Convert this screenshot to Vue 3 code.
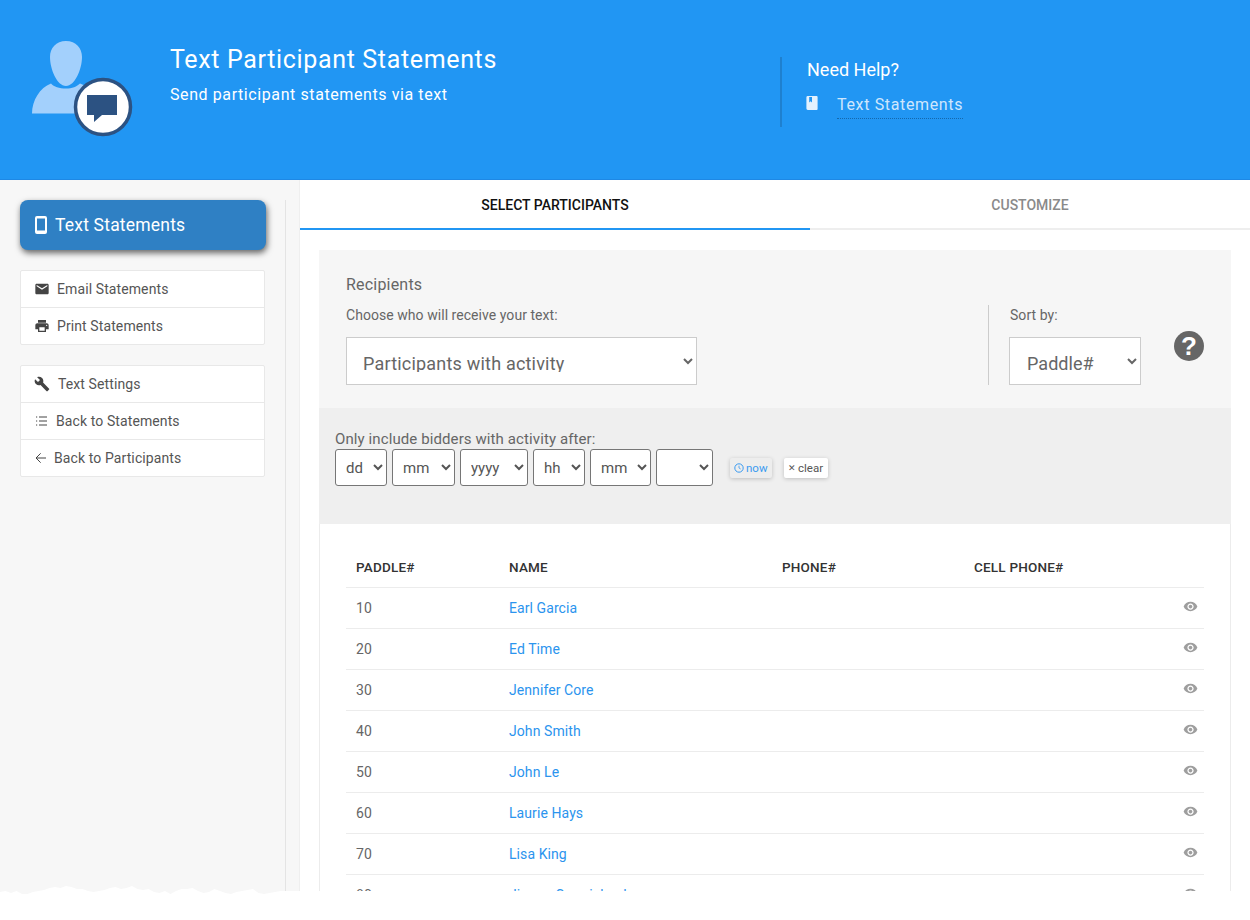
<script setup>
const nav1 = [
  { label: 'Email Statements', icon: 'mail' },
  { label: 'Print Statements', icon: 'print' },
]
const nav2 = [
  { label: 'Text Settings', icon: 'wrench' },
  { label: 'Back to Statements', icon: 'list' },
  { label: 'Back to Participants', icon: 'back' },
]
const icons = {
  mail: 'M20 4H4c-1.1 0-2 .9-2 2v12c0 1.1.9 2 2 2h16c1.1 0 2-.9 2-2V6c0-1.1-.9-2-2-2zm0 4-8 5-8-5V6l8 5 8-5v2z',
  print: 'M19 8H5c-1.66 0-3 1.34-3 3v6h4v4h12v-4h4v-6c0-1.66-1.34-3-3-3zm-3 11H8v-5h8v5zm3-7c-.55 0-1-.45-1-1s.45-1 1-1 1 .45 1 1-.45 1-1 1zm-1-9H6v4h12V3z',
  wrench: 'M22.7 19l-9.1-9.1c.9-2.3.4-5-1.5-6.9-2-2-5-2.4-7.4-1.3L9 6 6 9 1.6 4.7C.4 7.1.9 10.1 2.9 12.1c1.9 1.9 4.6 2.4 6.9 1.5l9.1 9.1c.4.4 1 .4 1.4 0l2.3-2.3c.5-.4.5-1.1.1-1.4z',
  list: 'M3 6h1.800M7.500 6h12M3 12h1.800M7.500 12h12M3 18h1.800M7.500 18h12',
  back: 'M18 12H3.500M10 5l-7 7 7 7',
}
const dateParts = [
  { label: 'dd', cls: 'w-dd' },
  { label: 'mm', cls: 'w-mm' },
  { label: 'yyyy', cls: 'w-yy' },
  { label: 'hh', cls: 'w-dd' },
  { label: 'mm', cls: 'w-mi' },
  { label: '', cls: 'w-ap' },
]
const rows = [
  ['10', 'Earl Garcia'],
  ['20', 'Ed Time'],
  ['30', 'Jennifer Core'],
  ['40', 'John Smith'],
  ['50', 'John Le'],
  ['60', 'Laurie Hays'],
  ['70', 'Lisa King'],
  ['80', 'Jimmy Carmichael'],
]
const eye = 'M12 4.5C7 4.5 2.73 7.61 1 12c1.73 4.39 6 7.5 11 7.5s9.27-3.11 11-7.5c-1.73-4.39-6-7.5-11-7.5zM12 17c-2.76 0-5-2.24-5-5s2.24-5 5-5 5 2.24 5 5-2.24 5-5 5zm0-8c-1.66 0-3 1.34-3 3s1.34 3 3 3 3-1.34 3-3-1.34-3-3-3z'

// torn paper edge along the bottom of the capture
const tornHeights = [7,6,8,6,9,9,7,6,5,3,2,3,1,2,4,4,6,7,6,5,3,2,4,3,1,4,5,4,7,8,6,9,6,4,4,3,6,8,7,4,6,8,9,7,6,5,4,8,9,8,7,6,6,6,6,6,6,6,6,6]
const tornPoints = (() => {
  const pts = ['0,920', '0,' + (885 + tornHeights[0])]
  tornHeights.forEach((h, i) => pts.push((i * 5.5).toFixed(1) + ',' + (885 + h)))
  pts.push('1250,891', '1250,920')
  return pts.join(' ')
})()
</script>

<template>
  <div class="page">
    <header class="hero">
      <div class="logo">
        <svg width="170" height="100" viewBox="0 33 170 100">
          <path class="person" d="M66 41c-10 0-16 7-16 16 0 12 7 29 16 29s16-17 16-29c0-9-6-16-16-16zM32 113.500c0-13 8-26 19-30 3 3.500 8 5 15 5 6 0 11-2 14-5l12 5v25z" />
          <circle class="ring" cx="103" cy="107" r="27.500" />
          <path class="bubble" d="M87 95h30v20h-15l-8 7v-7h-7z" />
        </svg>
      </div>
      <div class="hero-text">
        <h1>Text Participant Statements</h1>
        <p>Send participant statements via text</p>
      </div>
      <div class="help">
        <div class="help-title">Need Help?</div>
        <div class="help-link">
          <svg class="book" width="12" height="14" viewBox="0 0 12 15">
            <path d="M1.500 0H11a1 1 0 0 1 1 1v13a1 1 0 0 1-1 1H1.500A1.500 1.500 0 0 1 0 13.500v-12A1.500 1.500 0 0 1 1.500 0zM3 1v6l1.500-1.300L6 7V1z" fill-rule="evenodd" />
          </svg>
          <a>Text Statements</a>
        </div>
      </div>
    </header>

    <div class="body">
      <aside class="sidebar">
        <div class="sidebar-inner">
          <button class="primary">
            <svg width="12" height="18" viewBox="0 0 12 18">
              <path d="M2 0h8a2 2 0 0 1 2 2v14a2 2 0 0 1-2 2H2a2 2 0 0 1-2-2V2a2 2 0 0 1 2-2zm0 2.500v12h8v-12z" fill-rule="evenodd" />
            </svg>
            <span>Text Statements</span>
          </button>
          <ul class="nav">
            <li v-for="n in nav1" :key="n.label" :class="'i-' + n.icon">
              <svg class="nav-icon" width="16" height="16" viewBox="0 0 24 24"><path :d="icons[n.icon]" /></svg>
              <span>{{ n.label }}</span>
            </li>
          </ul>
          <ul class="nav">
            <li v-for="n in nav2" :key="n.label" :class="'i-' + n.icon">
              <svg class="nav-icon" width="16" height="16" viewBox="0 0 24 24"><path :d="icons[n.icon]" /></svg>
              <span>{{ n.label }}</span>
            </li>
          </ul>
        </div>
      </aside>

      <main class="main">
        <nav class="tabs">
          <div class="tab active">SELECT PARTICIPANTS</div>
          <div class="tab">CUSTOMIZE</div>
        </nav>
        <section class="panel">
          <div class="recipients">
            <div class="rec-left">
              <div class="rec-title">Recipients</div>
              <label class="rec-label">Choose who will receive your text:</label>
              <select class="big-select rec-select">
                <option>Participants with activity</option>
              </select>
            </div>
            <div class="rec-sort">
              <label class="rec-label">Sort by:</label>
              <select class="big-select sort-select">
                <option>Paddle#</option>
              </select>
            </div>
            <div class="q-badge">?</div>
          </div>

          <div class="date-filter">
            <div class="date-label">Only include bidders with activity after:</div>
            <div class="date-row">
              <select v-for="(p, i) in dateParts" :key="i" class="date-select" :class="p.cls">
                <option>{{ p.label }}</option>
              </select>
              <button class="mini now">
                <svg width="10" height="10" viewBox="0 0 10 10">
                  <circle cx="5" cy="5" r="4.200" fill="none" stroke="currentColor" />
                  <path d="M5 2.700V5l1.700 1" fill="none" stroke="currentColor" stroke-width=".8" />
                </svg>
                now
              </button>
              <button class="mini clear"><span class="x">✕</span>clear</button>
            </div>
          </div>

          <div class="table-wrap">
            <table>
              <thead>
                <tr>
                  <th class="c1">PADDLE#</th>
                  <th class="c2">NAME</th>
                  <th class="c3">PHONE#</th>
                  <th class="c4">CELL PHONE#</th>
                  <th class="c5"></th>
                </tr>
              </thead>
              <tbody>
                <tr v-for="r in rows" :key="r[0]">
                  <td class="c1">{{ r[0] }}</td>
                  <td class="c2"><a>{{ r[1] }}</a></td>
                  <td></td>
                  <td></td>
                  <td class="c5">
                    <svg width="15" height="15" viewBox="0 0 24 24"><path :d="eye" /></svg>
                  </td>
                </tr>
              </tbody>
            </table>
          </div>
        </section>
      </main>
    </div>

    <svg class="torn" width="1250" height="920" viewBox="0 0 1250 920">
      <polygon :points="tornPoints" fill="#fff" />
    </svg>
  </div>
</template>

<style>
html, body { margin: 0; background: #fff; }
</style>

<style scoped>
.page {
  position: relative;
  width: 1250px;
  height: 920px;
  overflow: hidden;
  background: #fff;
  font-family: Roboto, "Liberation Sans", sans-serif;
  color: #666;
}
.hero {
  height: 180px;
  box-sizing: border-box;
  background: #2196f3;
  display: flex;
  color: #fff;
  border-bottom: 1px solid #1e88e5;
}
.logo { width: 170px; flex: none; padding-top: 33px; box-sizing: border-box; }
.logo svg { display: block; overflow: visible; }
.person { fill: #a3d0fc; }
.ring { fill: #fff; stroke: #2c5282; stroke-width: 3.500; }
.bubble { fill: #2c5282; }
.hero-text { width: 610px; flex: none; padding-top: 44px; box-sizing: border-box; }
.hero-text h1 { margin: 0; font-size: 25px; line-height: 32px; font-weight: 400; letter-spacing: .65px; }
.hero-text p { margin: 9px 0 0; font-size: 16px; line-height: 20px; letter-spacing: .59px; }
.help {
  margin-top: 57px;
  height: 70px;
  border-left: 2px solid #1e80cf;
  padding-left: 25px;
  box-sizing: border-box;
}
.help-title { font-size: 18px; line-height: 24px; margin-top: 1px; }
.help-link { display: flex; margin-top: 12px; color: #cfe6fd; }
.book { fill: #e3f1fe; margin: 2px 19px 0 -1px; }
.help-link a {
  font-size: 16px;
  line-height: 22px;
  padding-bottom: 2px;
  letter-spacing: .65px;
  border-bottom: 1px dotted #1468ad;
}
.body { display: flex; height: 740px; }
.sidebar {
  width: 300px;
  flex: none;
  background: #f7f7f7;
  box-sizing: border-box;
  padding-top: 20px;
  border-right: 1px solid #efefef;
}
.sidebar-inner { width: 286px; height: 720px; box-sizing: border-box; padding-left: 20px; border-right: 1px solid #e4e4e4; }
.primary {
  width: 246px;
  height: 50px;
  border: 0;
  border-radius: 8px;
  background: #2f80c4;
  color: #fff;
  display: flex;
  align-items: center;
  gap: 8px;
  padding: 0 0 0 15px;
  font: 400 17.500px Roboto, sans-serif;
  letter-spacing: .2px;
  box-shadow: 1px 3px 6px rgba(0, 0, 0, .6);
}
.primary svg { fill: #fff; }
.nav {
  list-style: none;
  width: 245px;
  box-sizing: border-box;
  margin: 20px 0 0;
  padding: 0;
  background: #fff;
  border: 1px solid #e8e8e8;
  border-radius: 2px;
}
.nav li {
  height: 36px;
  box-sizing: border-box;
  display: flex;
  align-items: center;
  padding-left: 13px;
  font-size: 14px;
  letter-spacing: .1px;
  color: #555;
}
.nav li + li { height: 37px; border-top: 1px solid #e8e8e8; }
.nav-icon { fill: #444; margin-right: 7px; flex: none; }
.nav .i-wrench .nav-icon { margin-right: 8px; }
.nav .i-list .nav-icon { margin-right: 6px; fill: none; stroke: #444; stroke-width: 1.500; }
.nav .i-back .nav-icon { margin-right: 4px; fill: none; stroke: #444; stroke-width: 1.500; }
.main { width: 950px; flex: none; background: #fff; }
.tabs { display: flex; height: 50px; border-bottom: 2px solid #eee; box-sizing: border-box; }
.tab {
  flex: 0 0 440px;
  height: 50px;
  box-sizing: border-box;
  display: flex;
  align-items: center;
  justify-content: center;
  font-size: 14px;
  font-weight: 500;
  color: #8a8a8a;
}
.tab.active { flex: 0 0 510px; color: #111; border-bottom: 2px solid #2196f3; padding-top: 2px; }
.panel {
  width: 912px;
  margin: 20px 0 0 19px;
}
.recipients {
  height: 158px;
  box-sizing: border-box;
  background: #f6f6f6;
  display: flex;
  padding-left: 27px;
}
.rec-left { width: 642px; flex: none; padding-top: 25px; box-sizing: border-box; }
.rec-title { font-size: 16px; line-height: 20px; letter-spacing: .2px; }
.rec-label { display: block; font-size: 14px; line-height: 18px; letter-spacing: .05px; color: #666; }
.rec-left .rec-label { margin-top: 11px; }
.big-select {
  display: block;
  height: 48px;
  box-sizing: border-box;
  background: #fff;
  border: 1px solid #ccc;
  border-radius: 0;
  color: #666;
  font: 400 18px Roboto, sans-serif;
  letter-spacing: .2px;
  padding: 14px 0 12px 12px;
}
.rec-select { width: 351px; margin-top: 13px; }
.rec-sort {
  width: 186px;
  flex: none;
  margin-top: 55px;
  height: 80px;
  border-left: 1px solid #ccc;
  box-sizing: border-box;
  padding-left: 20px;
}
.rec-sort .rec-label { margin-top: 1px; padding-left: 1px; }
.sort-select { width: 132px; margin-top: 13px; padding-left: 13px; letter-spacing: .05px; }
.q-badge {
  width: 30px;
  height: 30px;
  margin-top: 81px;
  border-radius: 50%;
  background: #666;
  color: #fff;
  font: 700 26px/30px "Liberation Sans", sans-serif;
  text-align: center;
}
.date-filter { height: 116px; box-sizing: border-box; background: #efefef; padding: 22px 0 0 16px; }
.date-label { font-size: 15px; line-height: 18px; letter-spacing: .1px; color: #666; }
.date-row { display: flex; align-items: center; gap: 5px; margin-top: 1px; }
.date-select {
  height: 37px;
  box-sizing: border-box;
  background: #fff;
  border: 1px solid #767676;
  border-radius: 3px;
  color: #555;
  font: 400 15px Roboto, sans-serif;
  padding: 0 0 0 6px;
}
.w-dd { width: 52px; }
.w-mm { width: 63px; }
.w-mi { width: 61px; }
.w-yy { width: 68px; }
.w-ap { width: 57px; }
.mini {
  height: 20px;
  border: 0;
  border-radius: 2px;
  font: 400 11.500px Roboto, sans-serif;
  display: inline-flex;
  align-items: center;
  gap: 2px;
  padding: 0 4px;
  box-shadow: 0 1px 4px rgba(0, 0, 0, .2);
  margin-top: 1px;
}
.now { margin-left: 12px; width: 42px; background: #ededed; color: #3b9bf0; }
.clear { margin-left: 7px; width: 44px; background: #fff; color: #555; }
.x { font-size: 9px; }
.table-wrap {
  padding: 23px 26px 0;
  background: #fff;
  height: 400px;
  box-sizing: border-box;
  border: solid #ececec;
  border-width: 0 1px;
}
table { width: 858px; border-collapse: collapse; table-layout: fixed; font-size: 14px; letter-spacing: .08px; }
th {
  height: 40px;
  text-align: left;
  font-weight: 500;
  font-size: 13.500px;
  color: #333;
  padding: 0;
  letter-spacing: .2px;
}
td { height: 41px; box-sizing: border-box; padding: 0; border-top: 1px solid #ececec; color: #666; }
td a { color: #2b94ee; }
th.c1, td.c1 { width: 163px; padding-left: 10px; box-sizing: border-box; }
.c2 { width: 273px; }
.c3 { width: 192px; }
.c4 { width: 199px; }
.c5 { text-align: right; padding-right: 6px; box-sizing: border-box; }
.c5 svg { fill: #9e9e9e; display: inline-block; vertical-align: middle; margin-bottom: 3px; }
.torn { position: absolute; left: 0; top: 0; pointer-events: none; }
</style>
